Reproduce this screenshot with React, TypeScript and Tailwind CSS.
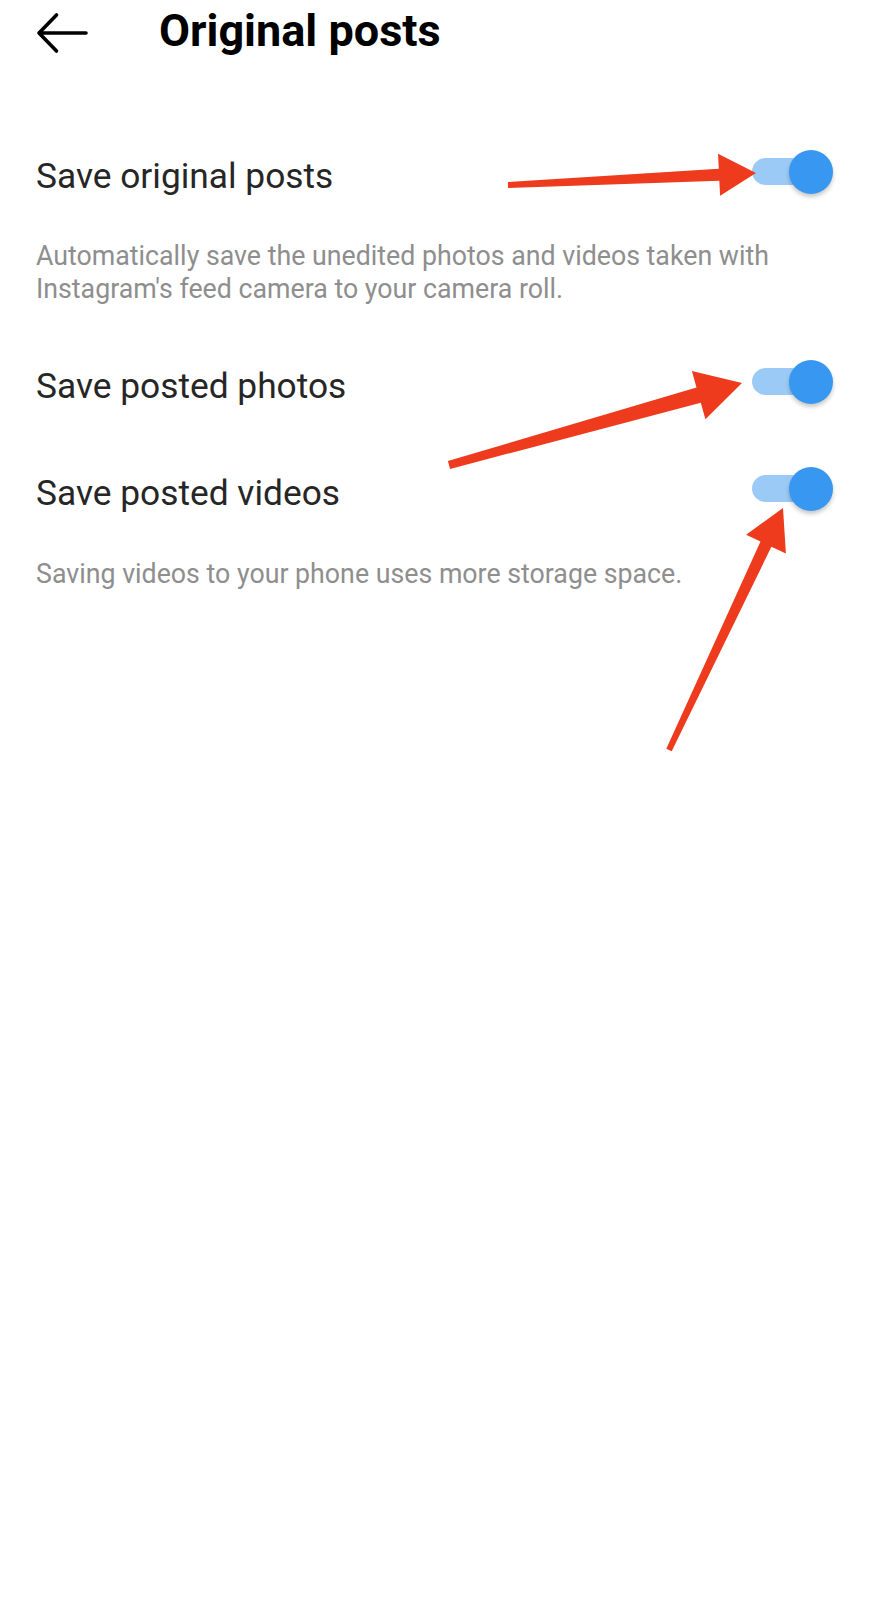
import React from "react";

type Pt = [number, number];

// Builds a tapered annotation arrow (shaft + triangular head) as polygon points.
function arrowPoints(tail: Pt, tip: Pt, headLen: number, headW: number, tailW: number, neckW: number): string {
  const dx = tip[0] - tail[0];
  const dy = tip[1] - tail[1];
  const len = Math.hypot(dx, dy);
  const ux = dx / len;
  const uy = dy / len;
  const nx = -uy;
  const ny = ux;
  const bx = tip[0] - ux * headLen;
  const by = tip[1] - uy * headLen;
  const pts: Pt[] = [
    [tail[0] + nx * tailW / 2, tail[1] + ny * tailW / 2],
    [bx + nx * neckW / 2, by + ny * neckW / 2],
    [bx + nx * headW / 2, by + ny * headW / 2],
    tip,
    [bx - nx * headW / 2, by - ny * headW / 2],
    [bx - nx * neckW / 2, by - ny * neckW / 2],
    [tail[0] - nx * tailW / 2, tail[1] - ny * tailW / 2],
  ];
  return pts.map((p) => `${p[0].toFixed(1)},${p[1].toFixed(1)}`).join(" ");
}

function Toggle() {
  return (
    <div className="relative w-[81px] h-[44px] shrink-0">
      <div className="absolute left-0 top-[8.5px] w-[66px] h-[27px] rounded-full bg-[#9ccaf6]" />
      <div className="absolute right-0 top-0 w-[44px] h-[44px] rounded-full bg-[#3897f0] shadow-[0_3px_4px_rgba(0,0,0,0.22)]" />
    </div>
  );
}

function Row({ label }: { label: string }) {
  return (
    <div className="flex h-[107px] items-center justify-between pl-[36px] pr-[40px]">
      <span className="pt-2 text-[35.3px] leading-[42px] text-[#262626]">{label}</span>
      <Toggle />
    </div>
  );
}

function Hint({ children }: { children: React.ReactNode }) {
  return <p className="px-[36px] text-[26.75px] leading-[33px] text-[#8e8e8e]">{children}</p>;
}

export default function App() {
  return (
    <div
      className="relative w-[873px] h-[1600px] overflow-hidden bg-white"
      style={{ fontFamily: "Roboto, 'Noto Sans', sans-serif" }}
    >
      <header className="flex h-[66px] items-center">
        <svg className="ml-[36px]" width="52" height="42" viewBox="0 0 52 42" fill="none">
          <path
            d="M50 21H3M20.5 3L3 21l17.5 18"
            stroke="#000"
            strokeWidth="3.6"
            strokeLinecap="round"
            strokeLinejoin="round"
          />
        </svg>
        <h1 className="ml-[71px] -mt-1 text-[45px] font-bold leading-[52px] text-black">Original posts</h1>
      </header>

      <div className="pt-[52px]">
        <Row label="Save original posts" />
        <div className="mt-[15px] mb-[22px]">
          <Hint>
            Automatically save the unedited photos and videos taken with
            <br />
            Instagram's feed camera to your camera roll.
          </Hint>
        </div>
        <Row label="Save posted photos" />
        <Row label="Save posted videos" />
        <div className="mt-[16px]">
          <Hint>Saving videos to your phone uses more storage space.</Hint>
        </div>
      </div>

      {/* red callout arrows pointing at the switches */}
      <svg className="pointer-events-none absolute inset-0" width="873" height="1600" viewBox="0 0 873 1600">
        <g fill="#ee3a1d">
          <polygon points={arrowPoints([508, 185], [756, 173], 37, 42, 6, 12)} />
          <polygon points={arrowPoints([449, 465], [742, 383], 45, 50, 8, 16)} />
          <polygon points={arrowPoints([669, 750], [783, 508], 40, 44, 6, 12)} />
        </g>
      </svg>
    </div>
  );
}
